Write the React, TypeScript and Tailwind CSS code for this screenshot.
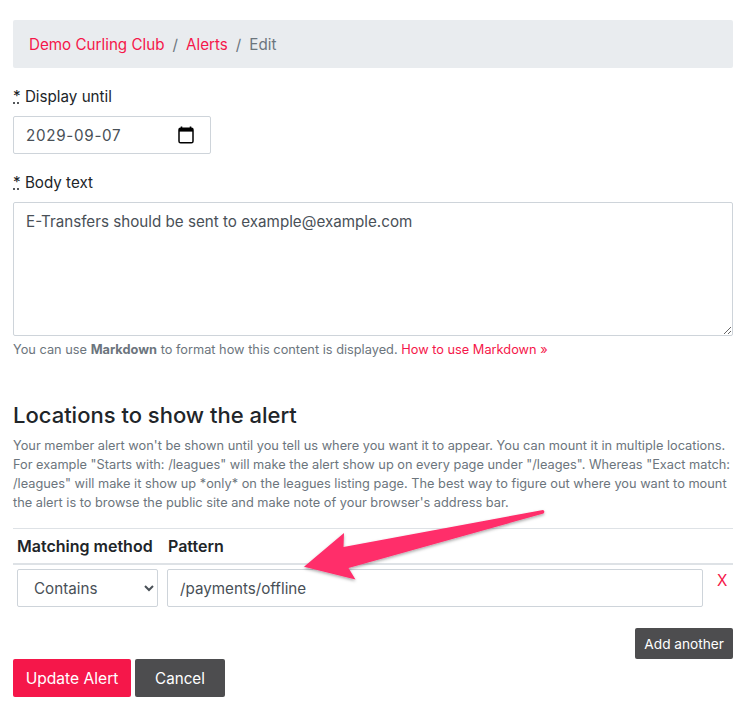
export default function App() {
  return (
    <div className="relative h-[709px] w-[749px] overflow-hidden bg-white pl-[13px] pr-[16px] pt-[20px] font-['Inter',sans-serif] text-[15.2px] leading-[24px] text-[#212529]">
      <nav className="flex h-[48px] items-center rounded-[2px] bg-[#e9ecef] px-[16px] pt-[2px]">
        <a className="text-[#f5174a]">Demo Curling Club</a>
        <span className="px-[8px] text-[#6c757d]">/</span>
        <a className="text-[#f5174a]">Alerts</a>
        <span className="px-[8px] text-[#6c757d]">/</span>
        <span className="text-[#6c757d]">Edit</span>
      </nav>

      <div className="mt-[16px]">
        <label className="mb-[7px] block pt-[1px]">
          <abbr className="underline decoration-dotted">*</abbr> Display until
        </label>
        <div className="flex h-[38px] w-[198px] items-center justify-between rounded-[2px] border border-[#ced4da] bg-white pl-[12px] pr-[16px] text-[#495057]">
          <span className="pt-[2px] tracking-[0.7px]">2029-09-07</span>
          <svg width="16" height="18" viewBox="0 0 16 18" fill="none">
            <path d="M3.5 0.5v3M12.5 0.5v3" stroke="#000" strokeWidth="1.6" />
            <rect x="1" y="2.2" width="14" height="14.6" rx="1.6" stroke="#000" strokeWidth="1.5" />
            <rect x="1" y="2.2" width="14" height="3.4" fill="#000" />
          </svg>
        </div>
      </div>

      <div className="mt-[16px]">
        <label className="mb-[7px] block pt-[1px]">
          <abbr className="underline decoration-dotted">*</abbr> Body text
        </label>
        <textarea
          defaultValue="E-Transfers should be sent to example@example.com"
          className="block h-[134px] w-[720px] resize-y rounded-[2px] border border-[#ced4da] bg-white px-[12px] py-[7px] text-[15.2px] leading-[24px] text-[#495057] outline-none"
        />
        <p className="mt-[4px] text-[12.79px] leading-[19px] text-[#6c757d]">
          You can use <strong className="font-bold">Markdown</strong> to format how this content is displayed.{" "}
          <a className="text-[#f5174a]">How to use Markdown »</a>
        </p>
      </div>

      <h4 className="mt-[42px] text-[22px] font-medium leading-[29px] text-[#212529]">Locations to show the alert</h4>
      <p className="mt-[6px] text-[12.79px] leading-[19px] text-[#6c757d]">
        Your member alert won't be shown until you tell us where you want it to appear. You can mount it in multiple locations. For example "Starts with: /leagues" will make the alert show up on every page under "/leages". Whereas "Exact match: /leagues" will make it show up *only* on the leagues listing page. The best way to figure out where you want to mount the alert is to browse the public site and make note of your browser's address bar.
      </p>

      <table className="mt-[16px] w-[720px] border-collapse">
        <thead>
          <tr className="border-t border-[#dee2e6]">
            <th className="h-[35px] w-[150px] border-b-2 border-[#dee2e6] px-[4px] text-left text-[16px] font-semibold">Matching method</th>
            <th className="border-b-2 border-[#dee2e6] px-[5px] text-left text-[16px] font-semibold">Pattern</th>
            <th className="w-[26px] border-b-2 border-[#dee2e6]"></th>
          </tr>
        </thead>
        <tbody>
          <tr>
            <td className="px-[4px] pt-[4px] align-top">
              <select className="block h-[38px] w-[141px] rounded-[2px] border border-[#ced4da] bg-white px-[12px] pt-[2px] text-[15.2px] text-[#495057] outline-none">
                <option>Contains</option>
              </select>
            </td>
            <td className="px-[4px] pt-[4px] align-top">
              <input
                type="text"
                defaultValue="/payments/offline"
                className="block h-[38px] w-full rounded-[2px] border border-[#ced4da] bg-white px-[12px] pt-[2px] text-[15.2px] text-[#495057] outline-none"
              />
            </td>
            <td className="pl-[10px] pt-[4px] align-top">
              <a className="block text-[#f5174a]">X</a>
            </td>
          </tr>
        </tbody>
      </table>

      <div className="mt-[21px] flex justify-end">
        <button className="h-[31px] rounded-[2px] bg-[#4d4d4f] px-[9px] pt-[2px] text-[13.68px] text-white">Add another</button>
      </div>

      <div className="flex gap-[4px]">
        <button className="h-[38px] w-[118px] rounded-[2px] bg-[#f5174a] pt-[2px] text-[15.6px] text-white">Update Alert</button>
        <button className="h-[38px] w-[90px] rounded-[2px] bg-[#4d4d4f] pt-[2px] text-[15.2px] text-white">Cancel</button>
      </div>

      <svg className="pointer-events-none absolute left-0 top-0" width="749" height="709" viewBox="0 0 749 709">
        <defs>
          <filter id="s" x="-10%" y="-20%" width="120%" height="150%">
            <feDropShadow dx="0" dy="1.5" stdDeviation="1.5" floodColor="#000" floodOpacity="0.35" />
          </filter>
        </defs>
        <path
          d="M304 566.7 L344 533 L343.5 547 L543 510 Q545.5 511.5 543.5 513.5 L348.5 568 L355.5 579.5 Z"
          fill="#ff2d6b"
          filter="url(#s)"
        />
      </svg>
    </div>
  );
}
